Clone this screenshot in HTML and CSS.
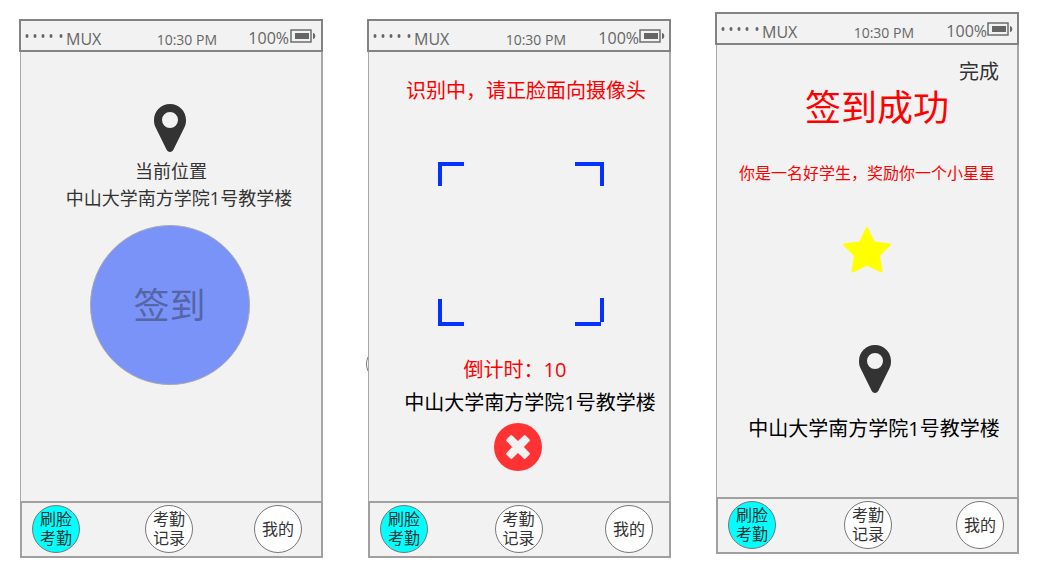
FILE: index.html
```html
<!DOCTYPE html>
<html lang="zh-CN">
<head>
<meta charset="utf-8">
<meta name="viewport" content="width=device-width, initial-scale=1">
<title>签到</title>
<link rel="stylesheet" href="styles.css">
</head>
<body>
<svg class="sprite" aria-hidden="true">
  <symbol id="pin" viewBox="0 0 32 48"><path fill-rule="evenodd" d="M16 0C7 0 0 7 0 16c0 3 .5 5 1.400 7l11.100 22.500C13.200 47 14.500 48 16 48s2.800-1 3.500-2.500L30.600 23c.9-2 1.400-4 1.400-7C32 7 25 0 16 0zm0 8a8 8 0 1 1 0 16 8 8 0 0 1 0-16z"/></symbol>
  <symbol id="signal" viewBox="0 0 40 6"><ellipse cx="2" cy="3" rx="1.500" ry="2"/><ellipse cx="10" cy="3" rx="1.500" ry="2"/><ellipse cx="18" cy="3" rx="1.500" ry="2"/><ellipse cx="26" cy="3" rx="1.500" ry="2"/><ellipse cx="36" cy="3" rx="1.500" ry="2"/></symbol>
  <symbol id="battery" viewBox="0 0 26 14"><path fill="none" stroke="#6e6e6e" stroke-width="1.500" d="M1 1h20v12H1z"/><path d="M5 4h14v6H5z"/><path d="M23 4c3 0 3 6 0 6z"/></symbol>
</svg>

<main class="board">
  <section class="phone phone-home">
    <header class="status">
      <svg class="signal"><use href="#signal"/></svg>
      <span class="carrier">MUX</span>
      <span class="time">10:30 PM</span>
      <span class="charge">100%</span>
      <svg class="battery"><use href="#battery"/></svg>
    </header>
    <div class="screen">
      <svg class="pin"><use href="#pin"/></svg>
      <p class="label">当前位置</p>
      <p class="label place-small">中山大学南方学院1号教学楼</p>
      <button class="sign" type="button">签到</button>
    </div>
    <nav class="tabs">
      <button class="tab active" type="button">刷脸<br>考勤</button>
      <button class="tab" type="button">考勤<br>记录</button>
      <button class="tab" type="button">我的</button>
    </nav>
  </section>

  <section class="phone phone-scan">
    <header class="status">
      <svg class="signal"><use href="#signal"/></svg>
      <span class="carrier">MUX</span>
      <span class="time">10:30 PM</span>
      <span class="charge">100%</span>
      <svg class="battery"><use href="#battery"/></svg>
    </header>
    <div class="screen">
      <p class="text alert hint">识别中，请正脸面向摄像头</p>
      <svg class="finder" viewBox="0 0 166 164" aria-hidden="true"><path fill="none" stroke="#0433ff" stroke-width="4" d="M26 2H2v22M137 2h27v22M2 137v25h24M164 136v24M137 162h26"/></svg>
      <p class="text alert countdown">倒计时：10</p>
      <p class="text place">中山大学南方学院1号教学楼</p>
      <button class="cancel" type="button" aria-label="取消">
        <svg viewBox="0 0 48 48"><circle cx="24" cy="24" r="24" fill="#ff3333"/><path fill="#f2f2f2" stroke="#f2f2f2" stroke-width="3" stroke-linejoin="round" d="M17.200 13.700l6.800 6.500 6.800-6.500 3.500 3.500-6.500 6.800 6.500 6.800-3.500 3.500-6.800-6.500-6.800 6.500-3.500-3.500 6.500-6.800-6.500-6.800z"/></svg>
      </button>
    </div>
    <nav class="tabs">
      <button class="tab active" type="button">刷脸<br>考勤</button>
      <button class="tab" type="button">考勤<br>记录</button>
      <button class="tab" type="button">我的</button>
    </nav>
  </section>

  <section class="phone phone-done">
    <header class="status">
      <svg class="signal"><use href="#signal"/></svg>
      <span class="carrier">MUX</span>
      <span class="time">10:30 PM</span>
      <span class="charge">100%</span>
      <svg class="battery"><use href="#battery"/></svg>
    </header>
    <div class="screen">
      <button class="finish" type="button">完成</button>
      <h1 class="title">签到成功</h1>
      <p class="praise">你是一名好学生，奖励你一个小星星</p>
      <svg class="star" viewBox="0 0 48 46" aria-hidden="true"><path fill="#ffff00" stroke="#ffff00" stroke-width="2" stroke-linejoin="round" d="M24 1l7 14.500 16 2L36 28.500l2.500 16L24 37.500l-14.500 7 2.500-16L1 17.500l16-2z"/></svg>
      <svg class="pin"><use href="#pin"/></svg>
      <p class="text place">中山大学南方学院1号教学楼</p>
    </div>
    <nav class="tabs">
      <button class="tab active" type="button">刷脸<br>考勤</button>
      <button class="tab" type="button">考勤<br>记录</button>
      <button class="tab" type="button">我的</button>
    </nav>
  </section>
</main>
</body>
</html>
```
FILE: styles.css
```css
* {
  box-sizing: border-box;
}

body {
  margin: 0;
  background: #fff;
  color: #333;
  font-family: "Open Sans", "Noto Sans CJK SC", sans-serif;
}

p,
h1 {
  margin: 0;
  white-space: nowrap;
}

button {
  padding: 0;
  border: 0;
  background: none;
  color: inherit;
  font: inherit;
  cursor: pointer;
}

.sprite {
  position: absolute;
  width: 0;
  height: 0;
}

.board {
  display: grid;
  grid-template-columns: repeat(3, minmax(300px, 1fr));
  gap: 44px;
  align-items: start;
  padding: 12px 29px 8px 19px;
}

.phone {
  position: relative;
  display: flex;
  flex-direction: column;
}

.phone-home,
.phone-scan {
  margin-top: 7px;
}

/* status bar */
.status {
  display: flex;
  align-items: center;
  height: 33px;
  padding: 0 4px;
  border: 2px solid #838383;
  background: #f2f2f2;
  color: #666;
  fill: #666;
  font-size: 16px;
  line-height: 20px;
}

.signal {
  width: 40px;
  height: 6px;
  flex: none;
}

.carrier {
  padding: 6px 0 0 1px;
}

.time {
  flex: 1;
  padding: 8px 0 0 24px;
  font-size: 14px;
  text-align: center;
}

.charge {
  padding-top: 4px;
}

.battery {
  width: 26px;
  height: 14px;
  flex: none;
}

.phone-home .battery {
  margin: 0 1px;
}

/* screen area */
.screen {
  display: flex;
  flex-direction: column;
  align-items: center;
  min-height: 449px;
  margin-left: 1px;
  border: solid #a8a8a8;
  border-width: 0 2px 0 1px;
  background: #f2f2f2;
}

.pin {
  width: 32px;
  height: 48px;
  flex: none;
  fill: #333;
}

.label {
  font-size: 18px;
  line-height: 27px;
}

.text {
  font-size: 20px;
  line-height: 32px;
}

.alert {
  color: #f00;
}

.place {
  padding-left: 22px;
  color: #000;
}

.phone-home .pin {
  margin: 52px 3px 6px 0;
}

.place-small {
  padding-left: 16px;
}

.sign {
  width: 160px;
  height: 160px;
  margin: 13px 3px 0 0;
  padding-bottom: 4px;
  border: 1px solid #aaa;
  border-radius: 50%;
  background: #7a93f9;
  color: #5565a5;
  font-size: 36px;
}

/* sliver of a round control behind the scan screen */
.phone-scan::before {
  content: "";
  position: absolute;
  z-index: -1;
  top: 328px;
  left: -1px;
  width: 32px;
  height: 32px;
  border: 1px solid #777;
  border-radius: 50%;
}

.hint {
  margin-top: 23px;
  padding-left: 14px;
}

.finder {
  width: 166px;
  height: 164px;
  margin: 55px 0 0 3px;
}

.countdown {
  margin-top: 28px;
  padding-right: 8px;
}

.phone-scan .place {
  margin-top: 1px;
}

.cancel {
  width: 48px;
  height: 48px;
  margin: 4px 3px 0 0;
}

.cancel svg {
  display: block;
}

.finish {
  align-self: flex-end;
  margin: 11px 18px 0 0;
  font-size: 20px;
  line-height: 32px;
}

.title {
  padding-left: 20px;
  color: #f00;
  font-size: 36px;
  font-weight: 400;
  line-height: 40px;
}

.praise {
  margin-top: 33px;
  color: #f00;
  font-size: 16px;
  line-height: 24px;
}

.star {
  width: 48px;
  height: 46px;
  margin-top: 42px;
}

.phone-done .pin {
  margin: 72px 0 20px 15px;
}

.phone-done .place {
  padding-left: 14px;
}

/* bottom tabs */
.tabs {
  display: flex;
  justify-content: space-between;
  margin-left: 1px;
  padding: 2px 16px 3px 10px;
  border: 2px solid #a0a0a0;
  background: #f2f2f2;
}

.tab {
  width: 48px;
  height: 48px;
  border: 1px solid #777;
  border-radius: 50%;
  background: #fff;
  font-size: 16px;
  line-height: 19px;
}

.tab:nth-child(2) {
  margin-left: 4px;
}

.tab.active {
  background: #0ff;
}

.phone-home .tabs {
  padding-right: 19px;
}

.phone-done .screen {
  min-height: 452px;
}

.phone-done .tabs {
  padding-right: 13px;
}
```
